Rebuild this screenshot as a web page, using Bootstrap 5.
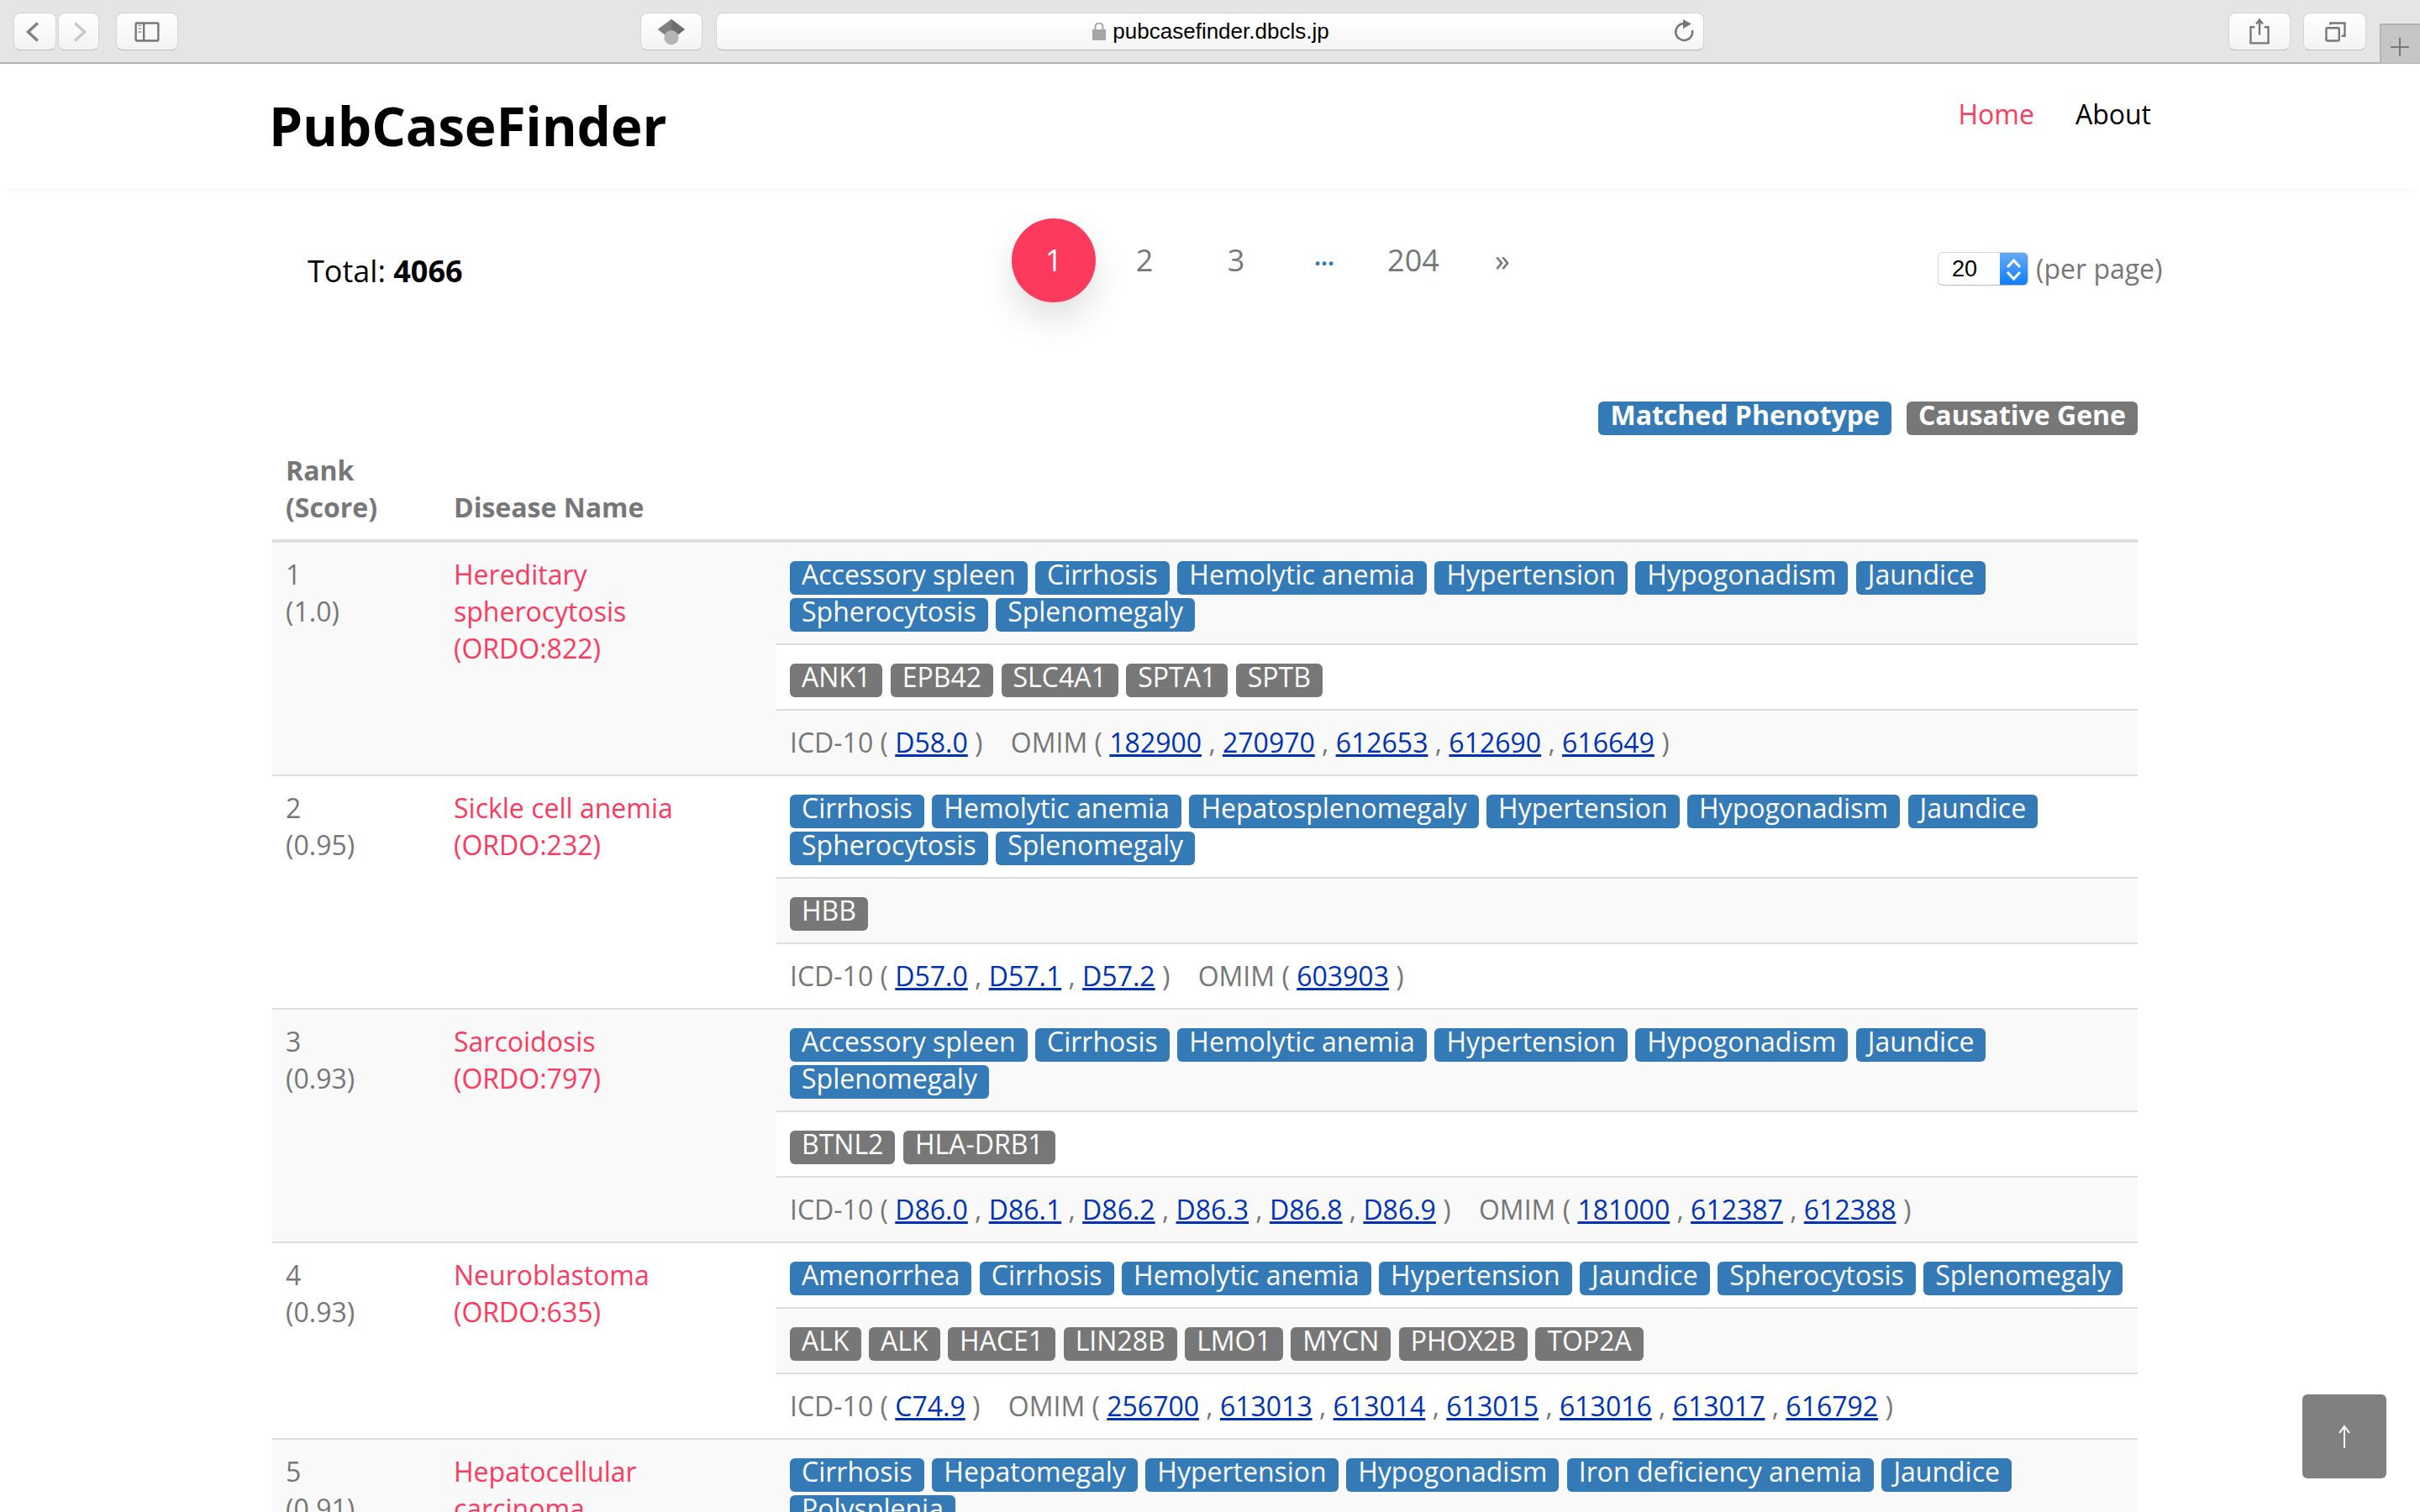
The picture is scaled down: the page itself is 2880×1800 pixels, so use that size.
<!DOCTYPE html>
<html lang="en">
<head>
  <meta charset="UTF-8" />
  <title>PubCaseFinder</title>
  <link href="https://cdn.jsdelivr.net/npm/bootstrap@5.3.0/dist/css/bootstrap.min.css" rel="stylesheet" />
  <style>
    html, body { height: 1800px; overflow: hidden; }
    body { font-family: "Open Sans", sans-serif; font-size: 32px; line-height: 44px; color: #777; background: #fff; }

    /* safari toolbar */
    .safari-bar { height: 76px; padding: 15px 0 0 16px; background: #e5e5e5; border-bottom: 2px solid #b3b3b3; }
    .safari-btn { height: 45px; width: 74px; flex: none; background: linear-gradient(#fff, #f3f3f3); border: 1px solid #d4d4d4; border-bottom-color: #bbb; border-radius: 8px; }
    .safari-btn svg { display: block; width: 100%; height: 100%; }
    .btn-back { width: 51px; }
    .btn-fwd { width: 49px; margin-left: 2px; }
    .btn-side { margin-left: 20px; }
    .btn-shield { margin-left: 550px; }
    .btn-share { margin-left: 624px; }
    .btn-tabs { margin-left: 15px; width: 75px; }
    .url-box { width: 1176px; margin-left: 16px; height: 45px; flex: none; background: linear-gradient(#fff, #f5f5f5); border: 1px solid #d4d4d4; border-bottom-color: #b5b5b5; border-radius: 8px; font-family: "Liberation Sans", sans-serif; font-size: 26px; line-height: 47px; color: #000; }
    .url-side { flex: 1 1 0; }
    .url-mid { padding-left: 2px; }
    .plus-tab { width: 48px; height: 47px; flex: none; margin: 13px 0 0 16px; background: #c6c6c6; border-left: 2px solid #b3b3b3; border-top: 2px solid #b3b3b3; }

    /* page */
    .site-nav { height: 148px; padding: 0; background: #fff; box-shadow: 0 8px 10px -8px rgba(0,0,0,.07); }
    .page-wrap { width: 2220px; margin-left: 324px; }
    .site-logo { font-size: 64px; line-height: 88px; font-weight: 700; letter-spacing: -.2px; color: #000; margin: 30px 0 0 -4px; }
    .site-links { margin: 38px -16px 0 0; gap: 49px; }
    .site-links a { color: #000; text-decoration: none; font-size: 32px; }
    .site-links a.is-on { color: #fc3a5e; }

    .total-box { width: 880px; flex: none; padding: 74px 0 0 42px; font-size: 36px; line-height: 50px; color: #000; }
    .pager-box { width: 1102px; flex: none; margin-top: 36px; }
    .pager-box .pagination { margin: 0; gap: 8px; }
    .pager-box .page-link { width: 100px; height: 100px; margin-left: 0; padding: 0; border: 0; background: transparent; color: #777; font-size: 36px; line-height: 100px; text-align: center; border-radius: 50% !important; }
    .pager-box .active .page-link { background: #fc3a5e; color: #fff; box-shadow: 0 20px 40px rgba(0,0,0,.12); }
    .pager-box .pg-num .page-link { width: 102px; }
    .pager-box .pg-dots .page-link { width: 94px; color: #337ab7; font-size: 28px; font-weight: 700; line-height: 90px; }
    .pager-box .pg-wide .page-link { width: 104px; }
    .pager-box .pg-next .page-link { width: 94px; }
    .perpage-box { flex: none; margin-top: 76px; gap: 9px; line-height: 40px; font-size: 32px; white-space: nowrap; }
    .perpage-select { width: 108px; height: 40px; padding: 0 0 0 16px; border: 1px solid #d6d6d6; border-bottom-color: #bbb; border-radius: 6px; font-family: "Liberation Sans", sans-serif; font-size: 27px; line-height: 38px; color: #000; appearance: none; background-color: #fff; background-image: url("data:image/svg+xml,%3Csvg xmlns='http://www.w3.org/2000/svg' width='33' height='40'%3E%3Cpath d='M9 17l7.500-8 7.500 8M9 23l7.500 8 7.500-8' fill='none' stroke='%23fff' stroke-width='3'/%3E%3C/svg%3E"), linear-gradient(#66aaf5, #0a7cff); background-repeat: no-repeat; background-size: 33px 40px; background-position: right top; }

    .legend-row { margin-top: 118px; gap: 18px; margin-bottom: 4px; }
    .tag-pheno, .tag-gene { display: inline-block; height: 40px; padding: 0 14px 8px; line-height: 32px; margin: 0 1.2px -4px 0; border-radius: 6px; color: #fff; white-space: nowrap; }
    .tag-pheno { background: #337ab7; }
    .tag-gene { background: #777; }
    .legend-row .tag-pheno, .legend-row .tag-gene { font-weight: 700; margin: 0; }

    .case-table { table-layout: fixed; margin: 0; --bs-table-color: #777; --bs-table-striped-color: #777; --bs-table-striped-bg: #f9f9f9; --bs-table-border-color: #ddd; --bs-table-bg: transparent; }
    .case-table > :not(caption) > * > * { padding: 16px; border-bottom-width: 2px; }
    .case-table thead th { border-bottom-width: 4px; font-weight: 700; vertical-align: bottom; }
    .col-rank { width: 200px; }
    .col-name { width: 400px; }
    .case-table a { color: #0033b4; }
    .case-table a.name-link { color: #fc3a5e; text-decoration: none; }
    .omim-part { margin-left: 25px; }

    .to-top { position: fixed; left: 2740px; top: 1660px; width: 100px; height: 100px; border-radius: 6px; background: #808080; }
  </style>
</head>
<body>

<div class="safari-bar d-flex">
  <div class="safari-btn btn-back"><svg viewBox="0 0 51 45"><path d="M29 12L17 23l12 11" fill="none" stroke="#808080" stroke-width="3.5"/></svg></div>
  <div class="safari-btn btn-fwd"><svg viewBox="0 0 49 45"><path d="M20 12l12 11-12 11" fill="none" stroke="#c8c8c8" stroke-width="3.5"/></svg></div>
  <div class="safari-btn btn-side"><svg viewBox="0 0 74 45"><rect x="23" y="12" width="28" height="22" rx="1" fill="none" stroke="#777" stroke-width="2.5"/><path d="M33 12v22" stroke="#777" stroke-width="2.5"/><path d="M26 15h4M26 19h4M26 23h4" stroke="#aaa" stroke-width="2"/></svg></div>
  <div class="safari-btn btn-shield"><svg viewBox="0 0 74 45"><path d="M37 7L20 20l17 13z" fill="#808080"/><path d="M37 7l17 13-17 13z" fill="#6e6e6e"/><circle cx="37" cy="30" r="9" fill="#b5b5b5"/></svg></div>
  <div class="url-box d-flex">
    <div class="url-side"></div>
    <div class="url-mid d-flex align-items-center gap-2">
      <svg width="16" height="21" viewBox="0 0 16 21"><path d="M3.500 9V5a4.500 4.500 0 0 1 9 0v4" fill="none" stroke="#a6a6a6" stroke-width="2"/><rect y="8" width="16" height="13" fill="#a6a6a6"/></svg>
      <span>pubcasefinder.dbcls.jp</span>
    </div>
    <div class="url-side d-flex justify-content-end">
      <svg width="40" height="43" viewBox="0 0 40 43"><path d="M17 12A10 10 0 1 0 27 20" fill="none" stroke="#777" stroke-width="2.5"/><path d="M16 7l10 5.500-10 5.500z" fill="#777"/></svg>
    </div>
  </div>
  <div class="safari-btn btn-share"><svg viewBox="0 0 74 45"><path d="M31 17h-5v20h22V17h-5" fill="none" stroke="#777" stroke-width="2.5"/><path d="M37 27V9M33 13l4-5 4 5" fill="none" stroke="#777" stroke-width="2.5"/></svg></div>
  <div class="safari-btn btn-tabs"><svg viewBox="0 0 75 45"><rect x="27" y="18" width="16" height="16" rx="1" fill="none" stroke="#777" stroke-width="2.5"/><path d="M32 14v-2h18v16h-4" fill="none" stroke="#777" stroke-width="2.5"/></svg></div>
  <div class="plus-tab"><svg width="46" height="45" viewBox="0 0 46 45"><path d="M11 23h22M22 12v22" stroke="#777" stroke-width="2"/></svg></div>
</div>

<nav class="navbar navbar-expand site-nav align-items-start">
  <div class="page-wrap d-flex justify-content-between align-items-start">
    <a class="site-logo text-decoration-none" href="#">PubCaseFinder</a>
    <div class="site-links d-flex">
      <a class="is-on" href="#">Home</a>
      <a href="#">About</a>
    </div>
  </div>
</nav>

<div class="page-wrap">
  <div class="d-flex align-items-start">
    <div class="total-box">Total: <strong>4066</strong></div>
    <div class="pager-box">
      <ul class="pagination">
        <li class="page-item active"><a class="page-link" href="#">1</a></li>
        <li class="page-item pg-num"><a class="page-link" href="#">2</a></li>
        <li class="page-item pg-num"><a class="page-link" href="#">3</a></li>
        <li class="page-item pg-dots"><a class="page-link" href="#">…</a></li>
        <li class="page-item pg-wide"><a class="page-link" href="#">204</a></li>
        <li class="page-item pg-next"><a class="page-link" href="#">»</a></li>
      </ul>
    </div>
    <div class="perpage-box d-flex">
      <select class="perpage-select"><option>20</option></select>
      <span>(per page)</span>
    </div>
  </div>

  <div class="legend-row d-flex justify-content-end">
    <span class="tag-pheno">Matched Phenotype</span>
    <span class="tag-gene">Causative Gene</span>
  </div>

  <table class="table table-striped case-table">
    <thead>
      <tr>
        <th class="col-rank">Rank<br>(Score)</th>
        <th class="col-name">Disease Name</th>
        <th></th>
      </tr>
    </thead>
    <tbody id="caseRows"></tbody>
  </table>
</div>

<a class="to-top d-flex align-items-center justify-content-center" href="#">
  <svg width="24" height="30" viewBox="0 0 24 30"><path d="M12 29V3M6 11l6-8 6 8" fill="none" stroke="#fff" stroke-width="2"/></svg>
</a>

<script src="https://cdn.jsdelivr.net/npm/bootstrap@5.3.0/dist/js/bootstrap.bundle.min.js"></script>
<script>
  const cases = [
    { rank: 1, score: "1.0", name: "Hereditary spherocytosis", ordo: 822,
      pheno: ["Accessory spleen", "Cirrhosis", "Hemolytic anemia", "Hypertension", "Hypogonadism", "Jaundice", "Spherocytosis", "Splenomegaly"],
      genes: ["ANK1", "EPB42", "SLC4A1", "SPTA1", "SPTB"],
      icd: ["D58.0"], omim: ["182900", "270970", "612653", "612690", "616649"] },
    { rank: 2, score: "0.95", name: "Sickle cell anemia", ordo: 232,
      pheno: ["Cirrhosis", "Hemolytic anemia", "Hepatosplenomegaly", "Hypertension", "Hypogonadism", "Jaundice", "Spherocytosis", "Splenomegaly"],
      genes: ["HBB"],
      icd: ["D57.0", "D57.1", "D57.2"], omim: ["603903"] },
    { rank: 3, score: "0.93", name: "Sarcoidosis", ordo: 797,
      pheno: ["Accessory spleen", "Cirrhosis", "Hemolytic anemia", "Hypertension", "Hypogonadism", "Jaundice", "Splenomegaly"],
      genes: ["BTNL2", "HLA-DRB1"],
      icd: ["D86.0", "D86.1", "D86.2", "D86.3", "D86.8", "D86.9"], omim: ["181000", "612387", "612388"] },
    { rank: 4, score: "0.93", name: "Neuroblastoma", ordo: 635,
      pheno: ["Amenorrhea", "Cirrhosis", "Hemolytic anemia", "Hypertension", "Jaundice", "Spherocytosis", "Splenomegaly"],
      genes: ["ALK", "ALK", "HACE1", "LIN28B", "LMO1", "MYCN", "PHOX2B", "TOP2A"],
      icd: ["C74.9"], omim: ["256700", "613013", "613014", "613015", "613016", "613017", "616792"] },
    { rank: 5, score: "0.91", name: "Hepatocellular carcinoma", ordo: null,
      pheno: ["Cirrhosis", "Hepatomegaly", "Hypertension", "Hypogonadism", "Iron deficiency anemia", "Jaundice", "Polysplenia"],
      genes: [], icd: [], omim: [] }
  ];

  const tags = (list, cls) => list.map(t => `<span class="${cls}">${t}</span>`).join(" ");
  const links = list => list.map(t => `<a href="#">${t}</a>`).join(" , ");

  document.getElementById("caseRows").innerHTML = cases.map(c => {
    // the last case runs off the bottom of the window, only its first row shows
    if (!c.genes.length) {
      return `<tr><td>${c.rank}<br>(${c.score})</td><td><a class="name-link" href="#">${c.name}</a></td>
        <td>${tags(c.pheno, "tag-pheno")}</td></tr>`;
    }
    return `<tr>
        <td rowspan="3">${c.rank}<br>(${c.score})</td>
        <td rowspan="3"><a class="name-link" href="#">${c.name}<br>(ORDO:${c.ordo})</a></td>
        <td>${tags(c.pheno, "tag-pheno")}</td>
      </tr>
      <tr><td>${tags(c.genes, "tag-gene")}</td></tr>
      <tr><td>ICD-10 ( ${links(c.icd)} ) <span class="omim-part">OMIM ( ${links(c.omim)} )</span></td></tr>`;
  }).join("");
</script>

</body>
</html>
